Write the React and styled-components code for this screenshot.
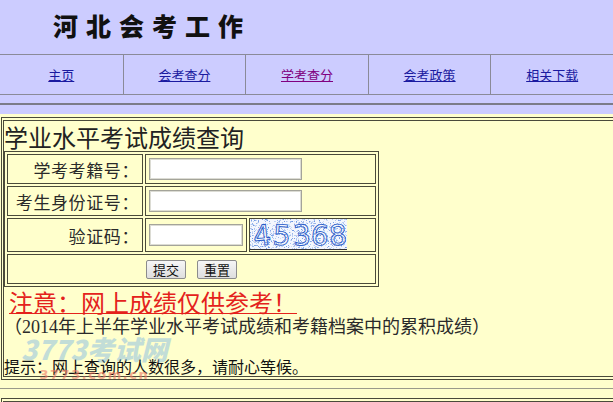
import React from 'react';
import styled, { createGlobalStyle } from 'styled-components';

const GlobalStyle = createGlobalStyle`
  html, body {
    margin: 0;
    padding: 0;
    background: #ffffcc;
    overflow: hidden;
  }
  body {
    font-family: "Liberation Serif", "Noto Sans CJK SC", serif;
    color: #222;
  }
`;

const Page = styled.div`
  width: 613px;
  height: 402px;
  overflow: hidden;
`;

const Header = styled.header`
  height: 54px;
  box-sizing: border-box;
  padding: 0 0 4px 53px;
  display: flex;
  align-items: center;
  background: #ccccff;
`;

const SiteTitle = styled.h1`
  margin: 0;
  font-family: "Noto Sans CJK SC", sans-serif;
  font-weight: 900;
  font-size: 25px;
  letter-spacing: 8px;
  color: #111;
`;

const Nav = styled.nav`
  display: grid;
  grid-template-columns: repeat(5, 1fr);
  height: 41px;
  box-sizing: border-box;
  border-top: 1px solid #8a8a98;
  border-bottom: 1px solid #8a8a98;
  background: #ccccff;
`;

const NavCell = styled.div`
  display: flex;
  align-items: center;
  justify-content: center;
  & + & {
    border-left: 1px solid #8a8a98;
  }
`;

const NavLink = styled.a`
  font-family: "Noto Sans CJK SC", sans-serif;
  font-size: 13px;
  color: ${(p) => (p.$visited ? '#800080' : '#1a1aa0')};
  text-decoration: underline;
`;

const Band = styled.div`
  background: #ccccff;
  padding: 8px 0 9px;
`;

const ThickRule = styled.div`
  height: 2px;
  background: #7c7c88;
`;

const OuterBox = styled.div`
  position: relative;
  margin: 3px 0 0 1px;
  border: 1px solid #4a4a3a;
  border-right: none;
  padding: 2px 0 2px 1px;
`;

const InnerBox = styled.div`
  border: 1px solid #4a4a3a;
  border-right: none;
  padding-top: 1px;
  min-height: ${(p) => p.$minHeight || 0}px;
`;

const PanelTitle = styled.h2`
  margin: 0;
  font-family: "Noto Sans CJK SC", sans-serif;
  font-weight: 400;
  font-size: 24px;
  line-height: 29px;
  color: #222;
`;

const FormGrid = styled.div`
  display: grid;
  width: max-content;
  grid-template-columns: 136px 102px 127px;
  grid-template-rows: 30px 30px 34px 30px;
  gap: 2px;
  padding: 2px;
  border: 1px solid #4a4a3a;
`;

const Cell = styled.div`
  box-sizing: border-box;
  border: 1px solid #4a4a3a;
  grid-column: ${(p) => (p.$span ? `span ${p.$span}` : 'auto')};
  display: flex;
  align-items: ${(p) => (p.$top ? 'flex-start' : 'center')};
  justify-content: ${(p) => p.$justify || 'flex-start'};
  padding: ${(p) => p.$pad || '0'};
  gap: 11px;
`;

const Label = styled.span`
  font-family: "Noto Sans CJK SC", sans-serif;
  font-size: 17px;
  letter-spacing: 0.6px;
  color: #2a2a2a;
  padding-right: 3px;
`;

const TextInput = styled.input`
  box-sizing: border-box;
  width: ${(p) => p.$w}px;
  height: 22px;
  margin: 0;
  border: 1px solid #a4a49a;
  box-shadow: inset 0 0 0 1px #dcdcd4;
  background: #fff;
  outline: none;
`;

const Button = styled.button`
  box-sizing: border-box;
  width: 40px;
  height: 19px;
  padding: 0;
  border: 1px solid #8c8c8c;
  border-radius: 2px;
  background: linear-gradient(#f6f6f6, #dedede);
  font-family: "Noto Sans CJK SC", sans-serif;
  font-size: 13px;
  line-height: 17px;
  color: #111;
`;

const CaptchaLink = styled.a`
  display: block;
  width: 97px;
  height: 30px;
  border-bottom: 1px solid #333;
`;

const Notice = styled.p`
  margin: 0;
  padding-left: 5px;
  font-family: "Noto Sans CJK SC", sans-serif;
  font-size: 24px;
  line-height: 30px;
  color: #e4221c;
  text-decoration: underline;
  text-decoration-thickness: 1px;
`;

const Remark = styled.p`
  margin: 0 0 19px;
  font-size: 18px;
  line-height: 21px;
  color: #2a2a2a;
`;

const Hint = styled.p`
  margin: 0;
  font-family: "Noto Sans CJK SC", sans-serif;
  font-size: 16px;
  line-height: 19px;
  color: #111;
`;

const Watermark = styled.div`
  position: absolute;
  left: 19px;
  top: 216px;
  display: flex;
  flex-direction: column;
  align-items: center;
  white-space: nowrap;
  pointer-events: none;
`;

const MarkBrand = styled.span`
  font-family: "Noto Sans CJK SC", sans-serif;
  font-weight: 900;
  font-style: italic;
  font-size: 27px;
  line-height: 30px;
  color: #6fb0e8;
  opacity: 0.42;
`;

const MarkDomain = styled.span`
  margin-top: 5px;
  font-family: "DejaVu Sans", sans-serif;
  font-weight: 700;
  font-size: 13px;
  letter-spacing: 1.5px;
  line-height: 12px;
  color: #f07a66;
  opacity: 0.6;
`;

const Rule = styled.div`
  margin: 8px 0 9px;
  border-top: 1px solid #9a9a8a;
`;

function Captcha() {
  let seed = 7;
  const rand = () => {
    seed = (seed * 9301 + 49297) % 233280;
    return seed / 233280;
  };
  const dots = [];
  for (let i = 0; i < 900; i++) {
    dots.push(
      <rect
        key={i}
        x={Math.floor(rand() * 97)}
        y={Math.floor(rand() * 30)}
        width="1"
        height="1"
        fill={rand() > 0.5 ? '#5a8ae0' : '#a9c2f0'}
        opacity={0.35 + rand() * 0.5}
      />
    );
  }
  const digits = [
    { ch: '4', x: 3, r: -6 },
    { ch: '5', x: 23, r: 4 },
    { ch: '3', x: 43, r: -3 },
    { ch: '6', x: 61, r: 6 },
    { ch: '8', x: 79, r: -4 },
  ];
  return (
    <svg width="97" height="30" viewBox="0 0 97 30">
      <rect width="97" height="30" fill="#f4f7fd" />
      {dots}
      {digits.map((d) => (
        <text
          key={d.x}
          x={d.x}
          y="26"
          transform={`rotate(${d.r} ${d.x + 9} 15)`}
          fontFamily="DejaVu Sans, sans-serif"
          fontSize="28"
          fill="none"
          stroke="#2a5cc8"
          strokeWidth="0.9"
        >
          {d.ch}
        </text>
      ))}
    </svg>
  );
}

const links = [
  { text: '主页' },
  { text: '会考查分' },
  { text: '学考查分', visited: true },
  { text: '会考政策' },
  { text: '相关下载' },
];

export default function App() {
  return (
    <Page>
      <GlobalStyle />
      <Header>
        <SiteTitle>河北会考工作</SiteTitle>
      </Header>
      <Nav>
        {links.map((l) => (
          <NavCell key={l.text}>
            <NavLink href="#" $visited={l.visited}>
              {l.text}
            </NavLink>
          </NavCell>
        ))}
      </Nav>
      <Band>
        <ThickRule />
      </Band>

      <OuterBox>
        <InnerBox>
          <PanelTitle>学业水平考试成绩查询</PanelTitle>
          <FormGrid>
            <Cell $justify="flex-end">
              <Label>学考考籍号：</Label>
            </Cell>
            <Cell $span={2} $pad="0 0 0 3px">
              <TextInput $w={153} />
            </Cell>
            <Cell $justify="flex-end">
              <Label>考生身份证号：</Label>
            </Cell>
            <Cell $span={2} $pad="0 0 0 3px">
              <TextInput $w={153} />
            </Cell>
            <Cell $justify="flex-end">
              <Label>验证码：</Label>
            </Cell>
            <Cell $pad="0 0 0 3px">
              <TextInput $w={94} />
            </Cell>
            <Cell $top>
              <CaptchaLink href="#">
                <Captcha />
              </CaptchaLink>
            </Cell>
            <Cell $span={3} $justify="center">
              <Button>提交</Button>
              <Button>重置</Button>
            </Cell>
          </FormGrid>
          <Notice>注意：网上成绩仅供参考！</Notice>
          <Remark>（2014年上半年学业水平考试成绩和考籍档案中的累积成绩）</Remark>
          <Hint>提示：网上查询的人数很多，请耐心等候。</Hint>
        </InnerBox>
        <Watermark>
          <MarkBrand>3773考试网</MarkBrand>
          <MarkDomain>3773.com.cn</MarkDomain>
        </Watermark>
      </OuterBox>

      <Rule />

      <OuterBox>
        <InnerBox $minHeight={20} />
      </OuterBox>
    </Page>
  );
}
